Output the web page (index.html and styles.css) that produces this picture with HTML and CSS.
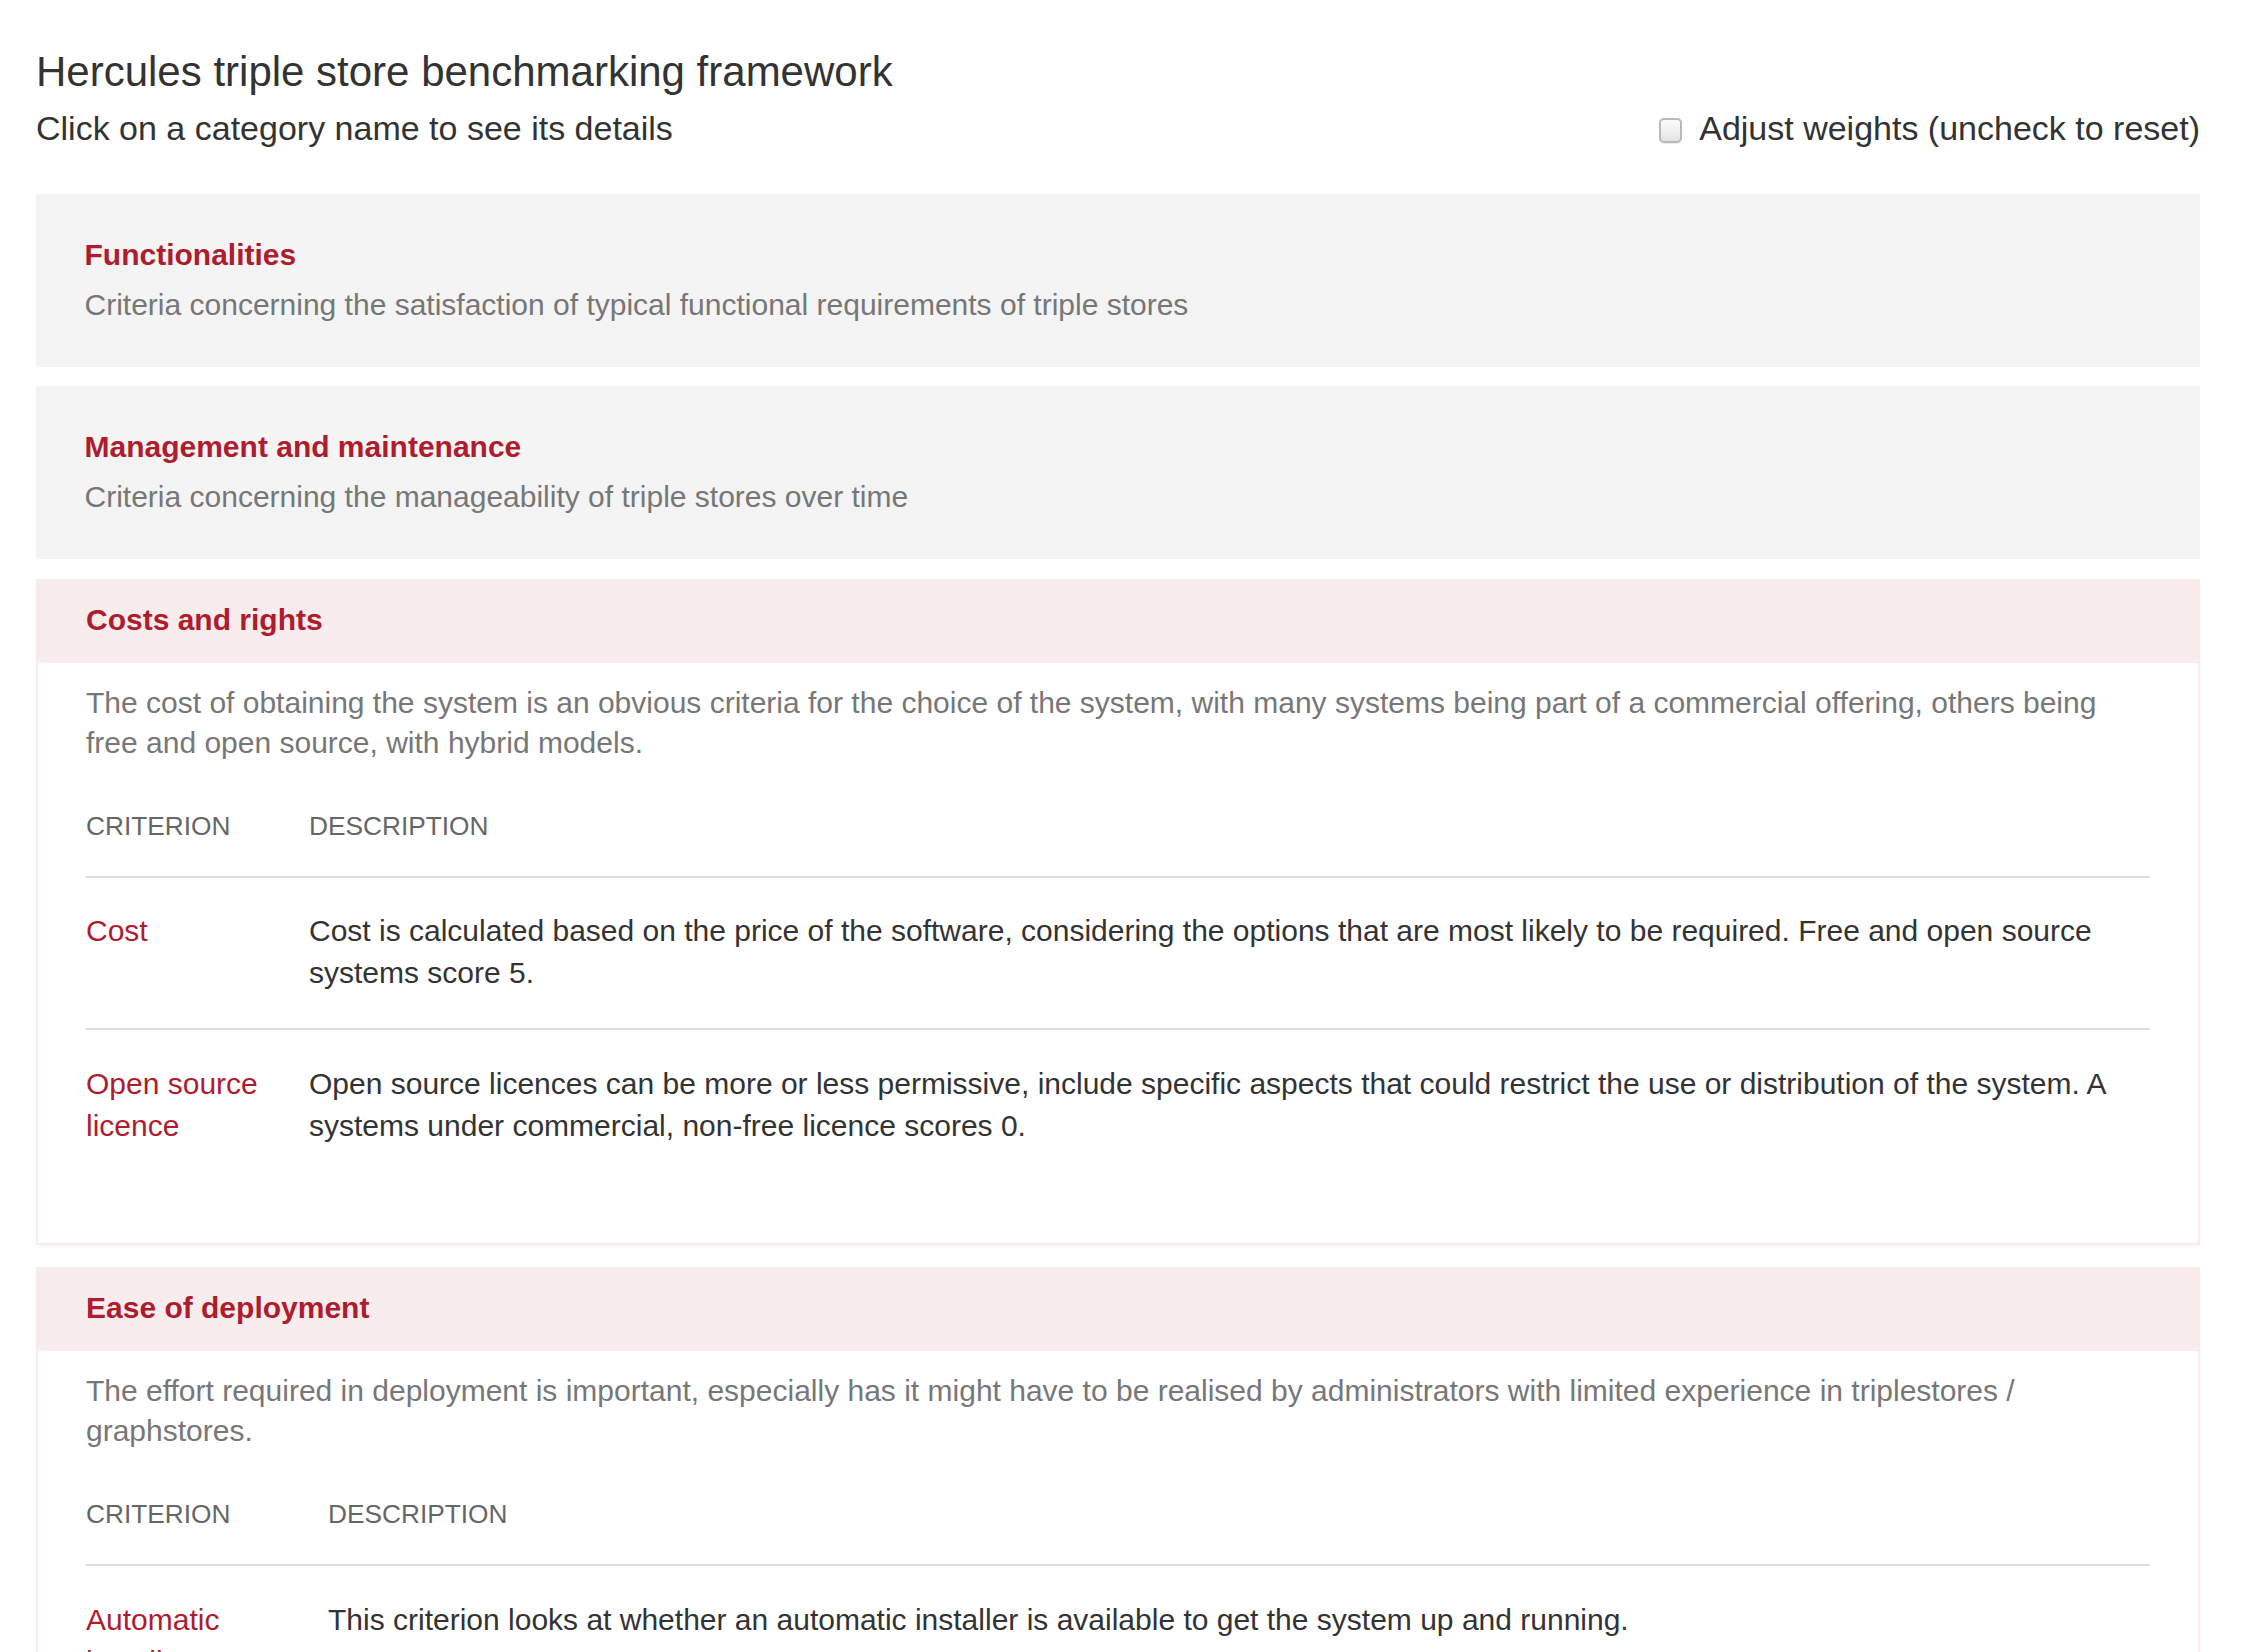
FILE: index.html
```html
<!DOCTYPE html>
<html lang="en">
<head>
<meta charset="utf-8">
<title>Hercules triple store benchmarking framework</title>
<link rel="stylesheet" href="styles.css">
</head>
<body>
<div class="page">
  <h1 class="title">Hercules triple store benchmarking framework</h1>
  <div class="toolbar">
    <p class="hint">Click on a category name to see its details</p>
    <label class="adjust"><input type="checkbox" class="cb"><span>Adjust weights (uncheck to reset)</span></label>
  </div>

  <section class="panel collapsed">
    <h2 class="cat-name">Functionalities</h2>
    <p class="cat-desc">Criteria concerning the satisfaction of typical functional requirements of triple stores</p>
  </section>

  <section class="panel collapsed">
    <h2 class="cat-name">Management and maintenance</h2>
    <p class="cat-desc">Criteria concerning the manageability of triple stores over time</p>
  </section>

  <section class="panel expanded">
    <div class="panel-head"><h2 class="cat-name">Costs and rights</h2></div>
    <div class="panel-body">
      <p class="intro">The cost of obtaining the system is an obvious criteria for the choice of the system, with many systems being part of a commercial offering, others being free and open source, with hybrid models.</p>
      <table class="criteria crit-costs">
        <thead>
          <tr><th class="col-name">Criterion</th><th>Description</th></tr>
        </thead>
        <tbody>
          <tr>
            <td class="crit">Cost</td>
            <td>Cost is calculated based on the price of the software, considering the options that are most likely to be required. Free and open source systems score 5.</td>
          </tr>
          <tr>
            <td class="crit">Open source licence</td>
            <td>Open source licences can be more or less permissive, include specific aspects that could restrict the use or distribution of the system. A systems under commercial, non-free licence scores 0.</td>
          </tr>
        </tbody>
      </table>
    </div>
  </section>

  <section class="panel expanded">
    <div class="panel-head"><h2 class="cat-name">Ease of deployment</h2></div>
    <div class="panel-body">
      <p class="intro">The effort required in deployment is important, especially has it might have to be realised by administrators with limited experience in triplestores / graphstores.</p>
      <table class="criteria crit-deploy">
        <thead>
          <tr><th class="col-name">Criterion</th><th>Description</th></tr>
        </thead>
        <tbody>
          <tr>
            <td class="crit">Automatic installer</td>
            <td>This criterion looks at whether an automatic installer is available to get the system up and running.</td>
          </tr>
          <tr>
            <td class="crit">Documentation</td>
            <td>The availability and quality of installation documentation.</td>
          </tr>
        </tbody>
      </table>
    </div>
  </section>
</div>
</body>
</html>
```

FILE: styles.css
```css
html, body {
  margin: 0;
  padding: 0;
  background: #ffffff;
}

body {
  font-family: "Liberation Sans", Arial, Helvetica, sans-serif;
  color: #333333;
  font-size: 30px;
}

.page {
  padding: 0 48px 60px 36px;
}

.title {
  margin: 48.5px 0 0;
  font-size: 42px;
  line-height: 46px;
  font-weight: normal;
  color: #333333;
}

.toolbar {
  display: flex;
  justify-content: space-between;
  align-items: center;
  margin-top: 10px;
  margin-bottom: 42.5px;
}

.hint {
  margin: 0;
  font-size: 34px;
  line-height: 47px;
}

.adjust {
  display: flex;
  align-items: center;
  gap: 17px;
  font-size: 34px;
  line-height: 47px;
}

.cb {
  appearance: none;
  -webkit-appearance: none;
  margin: 5px 0 0;
  width: 23px;
  height: 25px;
  box-sizing: border-box;
  border: 2px solid #b9b9b9;
  border-radius: 5px;
  background: linear-gradient(#fbfbfb, #e4e4e4);
  box-shadow: 0 1px 1px rgba(0, 0, 0, 0.08);
}

.panel {
  margin-bottom: 20px;
}

.cat-name {
  margin: 0;
  font-size: 30px;
  line-height: 42px;
  font-weight: bold;
  color: #ae1c2e;
}

.collapsed {
  background: #f4f4f4;
  padding: 39.5px 50px 39.5px 48.5px;
  height: 94px;
}

.collapsed + .collapsed {
  margin-top: -1px;
}

.cat-desc {
  margin: 8px 0 0;
  font-size: 30px;
  line-height: 42px;
  color: #777777;
}

.expanded {
  border: 2px solid #f8eced;
  background: #ffffff;
  margin-bottom: 22px;
  box-shadow: 0 2px 3px rgba(0, 0, 0, 0.03);
}

.panel-head {
  background: #f9eced;
  padding: 18px 48px 22px;
}

.panel-body {
  padding: 20px 48px 62.5px;
}

.intro {
  margin: 0 0 29.5px;
  font-size: 30px;
  line-height: 40px;
  color: #777777;
}

.criteria {
  width: 100%;
  border-collapse: collapse;
  table-layout: fixed;
}

.criteria th {
  text-align: left;
  font-weight: normal;
  text-transform: uppercase;
  font-size: 26.25px;
  line-height: 36.75px;
  color: #666666;
  padding: 15px 0 31.5px;
  border-bottom: 2px solid #dddddd;
}

.criteria td {
  vertical-align: top;
  font-size: 30px;
  line-height: 42px;
  color: #333333;
  padding: 32.5px 0 34px;
  border-top: 2px solid #dddddd;
}

.criteria tbody tr:first-child td {
  border-top: none;
}

.criteria td.crit {
  color: #ae1c2e;
}

.crit-costs .col-name {
  width: 223px;
}

.crit-deploy .col-name {
  width: 242px;
}
```
